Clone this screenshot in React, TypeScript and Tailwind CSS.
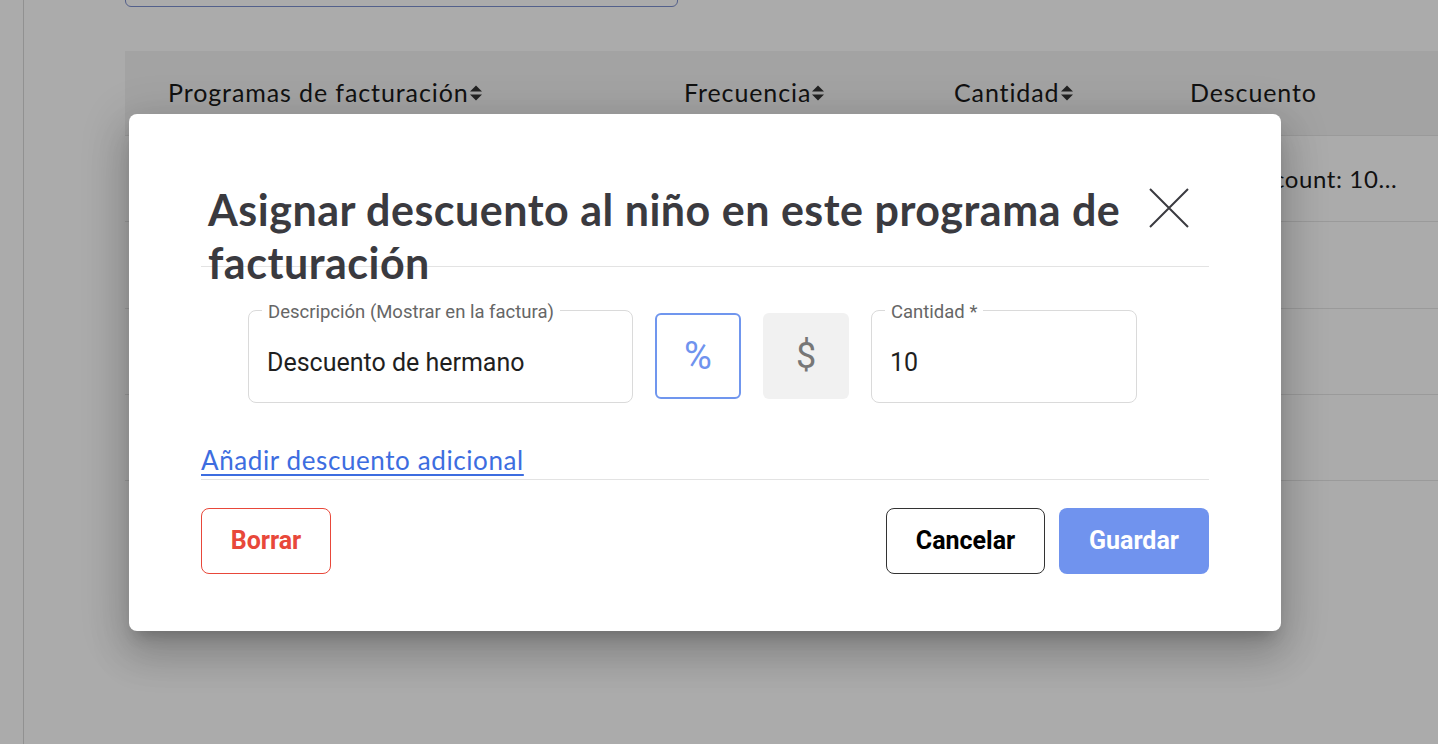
function SortIcon() {
  return (
    <svg width="14" height="18" viewBox="0 0 14 18" className="inline-block">
      <path d="M7 1.5 L13 7.5 H1 Z" fill="#333" />
      <path d="M7 16.5 L13 10.5 H1 Z" fill="#333" />
    </svg>
  );
}

function Field({ label, value, width }: { label: string; value: string; width: string }) {
  return (
    <div className={`relative h-[93px] rounded-[8px] border border-[#dadada] ${width}`}>
      <span className="absolute -top-[10px] left-[13px] bg-white px-[6px] font-['Roboto',sans-serif] text-[18.5px] leading-[22px] text-[#666]">
        {label}
      </span>
      <div className="flex h-full items-center pl-[18px] pt-[13px] font-['Roboto',sans-serif] text-[25px] text-[#1f1f1f]">
        {value}
      </div>
    </div>
  );
}

export default function App() {
  return (
    <div className="relative h-[744px] w-full overflow-hidden bg-white font-['Lato',sans-serif]">
      {/* Page behind the dialog */}
      <div className="flex h-full">
        <aside className="w-[24px] shrink-0 border-r border-[#d8d8d8]" />
        <main className="flex-1 pl-[101px]">
          <div className="-mt-[40px] h-[47px] w-[553px] rounded-[6px] border border-[#7d8fcf]" />

          <div className="mt-[44px]">
            <div className="flex h-[85px] items-center border-b border-[#e6e6e6] bg-[#f3f3f3] pl-[43px] text-[25px] tracking-[0.9px] text-[#1a1a1a]">
              <div className="flex w-[516px] items-center">
                Programas de facturación
                <SortIcon />
              </div>
              <div className="flex w-[270px] items-center">
                Frecuencia
                <SortIcon />
              </div>
              <div className="flex w-[236px] items-center">
                Cantidad
                <SortIcon />
              </div>
              <div>Descuento</div>
            </div>
            <div className="flex h-[86px] items-center border-b border-[#e6e6e6] pl-[1112px] text-[24px] tracking-[0.6px] text-[#1a1a1a]">
              Discount: 10...
            </div>
            <div className="h-[87px] border-b border-[#e6e6e6]" />
            <div className="h-[86px] border-b border-[#e6e6e6]" />
            <div className="h-[86px] border-b border-[#e6e6e6]" />
          </div>
        </main>
      </div>

      {/* Overlay + dialog */}
      <div className="absolute inset-0 flex items-center bg-black/[0.33] pl-[129px]">
        <div className="w-[1152px] rounded-[8px] bg-white px-[72px] pb-[57px] pt-[74px] shadow-[0_11px_15px_-7px_rgba(0,0,0,0.2),0_24px_38px_3px_rgba(0,0,0,0.14),0_9px_46px_8px_rgba(0,0,0,0.12)]">
          {/* Header */}
          <div className="flex h-[79px] items-start gap-[24px] border-b border-[#e3e3e3]">
            <h2 className="-mt-[5px] flex-1 pl-[7px] text-[43px] font-bold leading-[53px] tracking-[0.5px] text-[#3a3a3f]">
              Asignar descuento al niño en este programa de facturación
            </h2>
            <button className="mr-[20px] h-[40px] w-[40px] shrink-0">
              <svg width="40" height="40" viewBox="0 0 40 40">
                <path d="M1 1 L39 39 M39 1 L1 39" stroke="#3a3a3f" strokeWidth="2" />
              </svg>
            </button>
          </div>

          {/* Form row */}
          <div className="mt-[43px] flex items-center gap-[22px] pl-[47px]">
            <Field label="Descripción (Mostrar en la factura)" value="Descuento de hermano" width="w-[385px]" />
            <button className="flex h-[86px] w-[86px] items-center justify-center rounded-[6px] border-2 border-[#7096ee] font-['Roboto',sans-serif] text-[38px] text-[#6f93ee]">
              %
            </button>
            <button className="flex h-[86px] w-[86px] items-center justify-center rounded-[6px] bg-[#f1f1f1] font-['Roboto',sans-serif] text-[36px] text-[#777]">
              $
            </button>
            <Field label="Cantidad *" value="10" width="w-[266px]" />
          </div>

          {/* Link */}
          <a href="#" className="mt-[42px] block w-fit text-[26px] leading-[30px] tracking-[0.6px] text-[#3d6de0] underline underline-offset-[4px]">
            Añadir descuento adicional
          </a>
          <div className="mt-[4px] h-px bg-[#e3e3e3]" />

          {/* Footer */}
          <div className="mt-[28px] flex items-center font-['Roboto',sans-serif] text-[25px] font-bold">
            <button className="h-[66px] w-[130px] rounded-[8px] border border-[#e8483a] text-[#e8483a]">Borrar</button>
            <div className="ml-auto flex gap-[14px]">
              <button className="h-[66px] w-[159px] rounded-[8px] border border-[#333] text-black">Cancelar</button>
              <button className="h-[66px] w-[150px] rounded-[8px] bg-[#7093ee] text-white">Guardar</button>
            </div>
          </div>
        </div>
      </div>
    </div>
  );
}
